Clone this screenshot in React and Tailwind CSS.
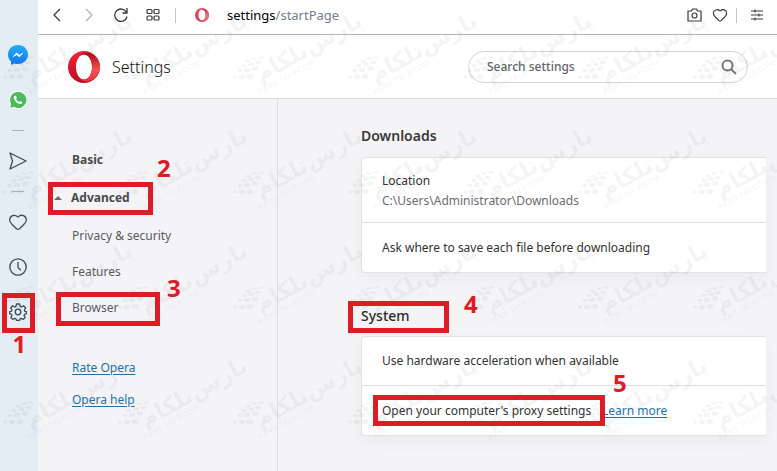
import { Heart } from "lucide-react";

const Watermark = () => {
    const columns = [0, 1, 2, 3, 4, 5, 6];
    const rows = [0, 1, 2, 3];
    return (
        <svg className="pointer-events-none absolute top-0 left-0 z-20" width="805" height="471" aria-hidden="true">
            {rows.map((row) =>
                columns.map((col) => (
                    <g
                        key={`${row}-${col}`}
                        transform={`translate(${2 + col * 115} ${27 + row * 115})`}
                        fill="#5b5b5b"
                        fillOpacity="0.065"
                    >
                        {/* globe dots */}
                        <g>
                            <ellipse cx="16" cy="34" rx="2.600" ry="1.2" />
                            <ellipse cx="22" cy="31.500" rx="2.800" ry="1.2" />
                            <ellipse cx="29" cy="30.500" rx="3" ry="1" />
                            <ellipse cx="12" cy="38.500" rx="2.700" ry="1.600" />
                            <ellipse cx="19" cy="37" rx="3" ry="1.800" />
                            <ellipse cx="26" cy="35.500" rx="3" ry="1.700" />
                            <ellipse cx="8" cy="43.500" rx="2.500" ry="1.800" />
                            <ellipse cx="15" cy="43" rx="3.100" ry="2.200" />
                            <ellipse cx="23" cy="41.500" rx="3.100" ry="2.300" />
                            <ellipse cx="3" cy="50" rx="2" ry="1.5" />
                            <ellipse cx="10" cy="50" rx="3" ry="2.200" />
                            <ellipse cx="18" cy="49.500" rx="3.300" ry="2.600" />
                        </g>
                        <text
                            transform="translate(28 56) rotate(-29)"
                            className="font-['DejaVu_Sans',sans-serif] text-[23px] font-bold"
                        >
                            {"پارس\u200cتلکام"}
                        </text>
                        <text
                            transform="translate(28 68) rotate(-29)"
                            className="font-['Liberation_Sans',sans-serif] text-[8px] font-bold"
                        >
                            PARS TELECOM
                        </text>
                    </g>
                ))
            )}
        </svg>
    );
};

const OperaLogo = ({ size }) => (
    <svg width={size} height={size} viewBox="0 0 32 32" aria-hidden="true">
        <defs>
            <linearGradient id="operaOuter" x1="0" y1="0" x2="0" y2="1">
                <stop offset="0" stopColor="#f5223a" />
                <stop offset="1" stopColor="#c00a25" />
            </linearGradient>
            <linearGradient id="operaInner" x1="0" y1="0" x2="0" y2="1">
                <stop offset="0" stopColor="#a30a1c" />
                <stop offset="0.6" stopColor="#f4544f" />
                <stop offset="1" stopColor="#e8333c" />
            </linearGradient>
        </defs>
        <path
            fill="url(#operaOuter)"
            fillRule="evenodd"
            d="M16 0a16 16 0 1 0 0 32a16 16 0 1 0 0-32zM16 3.5c4.500 0 8 5.500 8 12.500s-3.500 12.500-8 12.500s-8-5.500-8-12.500s3.500-12.500 8-12.500z"
        />
        <path
            fill="url(#operaInner)"
            d="M11 5.300C13 2.500 16 1.200 19 1.500C26 2.500 32 8.500 32 16S26 29.500 19 30.500C16 30.800 13 29.500 11 26.700C12.400 28 14 28.500 16 28.500C20.500 28.500 24 23 24 16S20.500 3.500 16 3.500C14 3.500 12.400 4 11 5.300z"
        />
    </svg>
);

const MessengerIcon = () => (
    <svg width="20" height="20" viewBox="0 0 20 20" aria-hidden="true">
        <defs>
            <linearGradient id="messenger" x1="0" y1="0" x2="0" y2="1">
                <stop offset="0" stopColor="#1fb0f5" />
                <stop offset="1" stopColor="#1a72f2" />
            </linearGradient>
        </defs>
        <path
            fill="url(#messenger)"
            d="M10 0C4.300 0 0 4.100 0 9.600c0 2.900 1.200 5.300 3 7V20l3.200-1.600c1.200.400 2.500.600 3.800.600 5.700 0 10-4 10-9.400S15.700 0 10 0z"
        />
        <path fill="#fff" d="M4 12.500l4.600-4.900 2.700 2.200L16 7.300l-4.600 5-2.700-2.200z" />
    </svg>
);

const WhatsappIcon = () => (
    <svg width="18" height="18" viewBox="0 0 18 18" aria-hidden="true">
        <path fill="#f6fbf7" d="M9 0a9 9 0 0 0-7.800 13.500L0 18l4.700-1.200A9 9 0 1 0 9 0z" />
        <path fill="#4cba5c" d="M9 1a8 8 0 0 0-6.900 12L1.200 16.700l3.800-1A8 8 0 1 0 9 1z" />
        <path
            fill="#fff"
            d="M6.200 4.800c-.9.300-1.500 1.100-1.300 2.200.5 2.900 3.300 5.700 6.200 6 1 .1 2-.6 2.100-1.600l-.1-.5-1.900-.9-.9 1c-1.500-.600-2.700-1.800-3.300-3.200l.8-.9-.8-2.100z"
        />
    </svg>
);

const GearIcon = () => (
    <svg
        width="18"
        height="18"
        viewBox="0 0 18 18"
        fill="none"
        stroke="currentColor"
        strokeWidth="1.3"
        strokeLinejoin="round"
        aria-hidden="true"
    >
        <path d="M7.400 1h3.200l.5 2.300 1.200.7 2.300-1.300 2 2.300-1.200 2 .4 1.400 1.700.3v2l-1.900.6-.5 1.300 1.100 1.900-1.900 1.900-2.100-1.100-1.100.500-.6 1.700H7.500l-.6-1.700-1.200-.5-2 1.100-1.900-1.900 1.100-1.900-.5-1.300L.600 10.700v-2l1.800-.3.500-1.400-1.200-2 2-2.300L6 4l1-.7z" />
        <circle cx="9" cy="9" r="2.800" />
    </svg>
);

const SideButton = ({ label, className, children }) => (
    <button type="button" aria-label={label} className={`flex w-full items-center justify-center text-[#3f4b57] ${className}`}>
        {children}
    </button>
);

const Step = ({ className, children }) => (
    <span className={`absolute font-['Open_Sans',sans-serif] text-[24px] leading-[30px] font-bold text-[#e01b24] ${className}`}>
        {children}
    </span>
);

const Sidebar = () => (
    <aside className="flex w-[38px] shrink-0 flex-col items-center bg-[#e4ecf4] pr-[2px] pt-[45px]">
        <SideButton label="Messenger" className="h-5">
            <MessengerIcon />
        </SideButton>
        <SideButton label="WhatsApp" className="mt-[26px] h-[18px]">
            <WhatsappIcon />
        </SideButton>
        <hr className="mt-[21px] w-3 border-[#aab4bd]" />
        <SideButton label="My Flow" className="mt-[20px] h-5">
            <svg width="18" height="18" viewBox="0 0 18 18" fill="none" stroke="currentColor" strokeWidth="1.3" strokeLinejoin="round">
                <path d="M1 1l16 8-16 8 2.500-8z" />
            </svg>
        </SideButton>
        <hr className="mt-[20px] w-3 border-[#aab4bd]" />
        <SideButton label="Bookmarks" className="mt-[20px] h-5">
            <Heart size={20} strokeWidth={1.5} />
        </SideButton>
        <SideButton label="History" className="mt-[25px] h-5">
            <svg width="18" height="18" viewBox="0 0 18 18" fill="none" stroke="currentColor" strokeWidth="1.3">
                <circle cx="9" cy="9" r="8.200" />
                <path d="M9 4v5.500l2.800 2.800" />
            </svg>
        </SideButton>
        <div className="relative mt-[16px]">
            <button
                type="button"
                aria-label="Settings"
                className="flex h-[40px] w-[33px] items-center justify-center border-5 border-[#e01b24] pb-0.5 text-[#3f4b57]"
            >
                <GearIcon />
            </button>
            <Step className="top-[36px] left-[11px]">1</Step>
        </div>
    </aside>
);

const Toolbar = () => (
    <div className="flex h-[35px] items-center border-b border-[#b3b3b3] bg-white px-[14px] pb-[4px] text-[#3b3b3b]">
        <button type="button" aria-label="Back">
            <svg width="10" height="14" viewBox="0 0 10 14" fill="none" stroke="currentColor" strokeWidth="1.3">
                <path d="M8 1L2 7l6 6" />
            </svg>
        </button>
        <button type="button" aria-label="Forward" className="ml-[22px] text-[#b5b5b5]">
            <svg width="10" height="14" viewBox="0 0 10 14" fill="none" stroke="currentColor" strokeWidth="1.3">
                <path d="M2 1l6 6-6 6" />
            </svg>
        </button>
        <button type="button" aria-label="Reload" className="ml-[20px]">
            <svg width="14" height="14" viewBox="0 0 14 14" fill="none" stroke="currentColor" strokeWidth="1.3">
                <path d="M13 8.500A6.200 6.200 0 1 1 12.500 4.500M13 0v5H8.500" />
            </svg>
        </button>
        <button type="button" aria-label="Speed dial" className="ml-[18px]">
            <svg width="14" height="14" viewBox="0 0 14 14" fill="none" stroke="currentColor" strokeWidth="1.200">
                <rect x="1" y="1.500" width="5" height="4" rx="1" />
                <rect x="8" y="1.500" width="5" height="4" rx="1" />
                <rect x="1" y="8" width="5" height="4" rx="1" />
                <rect x="8" y="8" width="5" height="4" rx="1" />
            </svg>
        </button>
        <span className="ml-[15px] h-[15px] w-px bg-[#c4c4c4]" />
        <span className="ml-[19px] opacity-80">
            <OperaLogo size={14} />
        </span>
        <span className="ml-[18px] text-[13px] leading-[18px] text-[#73808a]">
            <span className="text-black">settings</span>/startPage
        </span>
        <button type="button" aria-label="Snapshot" className="ml-auto">
            <svg width="15" height="14" viewBox="0 0 15 14" fill="none" stroke="currentColor" strokeWidth="1.200">
                <path d="M1 3h3.500l1-2h4l1 2H14v10H1z" />
                <circle cx="7.500" cy="7.500" r="2.500" />
            </svg>
        </button>
        <button type="button" aria-label="Add to bookmarks" className="ml-[10px]">
            <Heart size={16} strokeWidth={1.7} />
        </button>
        <span className="ml-[8px] h-[15px] w-px bg-[#c4c4c4]" />
        <button type="button" aria-label="Easy setup" className="ml-[14px]">
            <svg width="12" height="12" viewBox="0 0 12 12" fill="none" stroke="currentColor" strokeWidth="1.100">
                <path d="M0 2h12M0 6h12M0 10h12M4 .5v3M8 4.500v3M4 8.500v3" />
            </svg>
        </button>
    </div>
);

const Header = () => (
    <header className="flex h-16 items-center border-b border-[#dcdcde] bg-white pr-[29px] pl-[30px]">
        <OperaLogo size={32} />
        <h1 className="ml-[12px] text-[16px] leading-6 font-light text-[#111]">Settings</h1>
        <label className="ml-auto flex h-8 w-[280px] items-center rounded-full border border-[#d6d6d8] pr-[10px] pl-[18px]">
            <input
                type="text"
                aria-label="Search settings"
                placeholder="Search settings"
                className="min-w-0 flex-1 bg-transparent text-[12px] leading-[18px] font-medium outline-none placeholder:text-[#62666b]"
            />
            <svg width="16" height="16" viewBox="0 0 16 16" fill="none" stroke="#777" strokeWidth="2" aria-hidden="true">
                <circle cx="6.500" cy="6.500" r="5" />
                <path d="M10 10l5 5" />
            </svg>
        </label>
    </header>
);

const Nav = () => (
    <nav className="w-[240px] shrink-0 border-r border-[#dedee1] pt-[52px] pl-[34px] text-[12px] leading-[18px] text-[#5a5a5e]">
        <a href="#basic" className="block w-max font-bold text-[#4a4a4d]">Basic</a>
        <div className="relative mt-[13px] -ml-[24px] flex h-[33px] w-[105px] items-center border-5 border-[#e01b24] pb-0.5 text-[#4a4a4d]">
            <svg width="8" height="4" viewBox="0 0 8 4" className="ml-px" aria-hidden="true">
                <path d="M4 0l4 4H0z" fill="#6b6b6e" />
            </svg>
            <a href="#advanced" className="ml-[9px] font-bold">Advanced</a>
            <Step className="-top-[34px] left-[104px]">2</Step>
        </div>
        <a href="#privacy" className="mt-[12px] block w-max">Privacy &amp; security</a>
        <a href="#features" className="mt-[18px] block w-max">Features</a>
        <div className="relative mt-[11px] -ml-[16px] flex h-[34px] w-[104px] items-center border-5 border-[#e01b24] pb-0.5 pl-[11px]">
            <a href="#browser">Browser</a>
            <Step className="-top-[24px] left-[106px]">3</Step>
        </div>
        <a href="#rate" className="mt-[33px] block w-max text-[#1b73ae] underline underline-offset-2">Rate Opera</a>
        <a href="#help" className="mt-[14px] block w-max text-[#1b73ae] underline underline-offset-2">Opera help</a>
    </nav>
);

const Card = ({ children }) => (
    <div className="divide-y divide-[#dedee1] rounded-l-sm border-y border-l border-[#e2e2e5] bg-white text-[12px] leading-5 text-[#333] shadow-[0_6px_16px_rgba(0,0,0,0.04)]">
        {children}
    </div>
);

const Content = () => (
    <main className="min-w-0 flex-1 pt-[26px] pr-[11px] pl-[83px]">
        <h2 className="text-[14px] leading-[22px] font-semibold text-[#3a3a3a]">Downloads</h2>
        <div className="mt-[10px]">
            <Card>
                <div className="px-5 pt-[13px] pb-[11px]">
                    <p>Location</p>
                    <p className="text-[#6d6d75]">C:\Users\Administrator\Downloads</p>
                </div>
                <div className="flex h-[49px] items-center px-5">Ask where to save each file before downloading</div>
            </Card>
        </div>
        <div className="relative mt-[28px] -ml-[13px] flex h-[32px] w-[101px] items-center border-5 border-[#e01b24] pb-0.5 pl-[8px]">
            <h2 className="text-[14px] leading-[22px] font-medium text-[#2b2b2b]">System</h2>
            <Step className="-top-[17px] left-[111px]">4</Step>
        </div>
        <div className="mt-[3px]">
            <Card>
                <div className="flex h-[49px] items-center px-5">Use hardware acceleration when available</div>
                <div className="relative flex h-[49px] items-center pl-[11px]">
                    <div className="relative z-10 flex h-[31px] w-[232px] items-center border-5 border-[#e01b24] pl-[4px] whitespace-nowrap">
                        Open your computer's proxy settings
                    </div>
                    <a href="#learn" className="-ml-[3px] text-[#1b73ae] underline underline-offset-2">Learn more</a>
                    <Step className="-top-[18px] left-[251px]">5</Step>
                </div>
            </Card>
        </div>
    </main>
);

const App = () => {
    return (
        <div className="relative flex min-h-screen overflow-hidden bg-[#f4f4f7] font-['Noto_Sans',sans-serif]">
            <Sidebar />
            <div className="flex min-w-0 flex-1 flex-col">
                <Toolbar />
                <Header />
                <div className="flex flex-1">
                    <Nav />
                    <Content />
                </div>
            </div>
            <Watermark />
        </div>
    );
};

export default App;
